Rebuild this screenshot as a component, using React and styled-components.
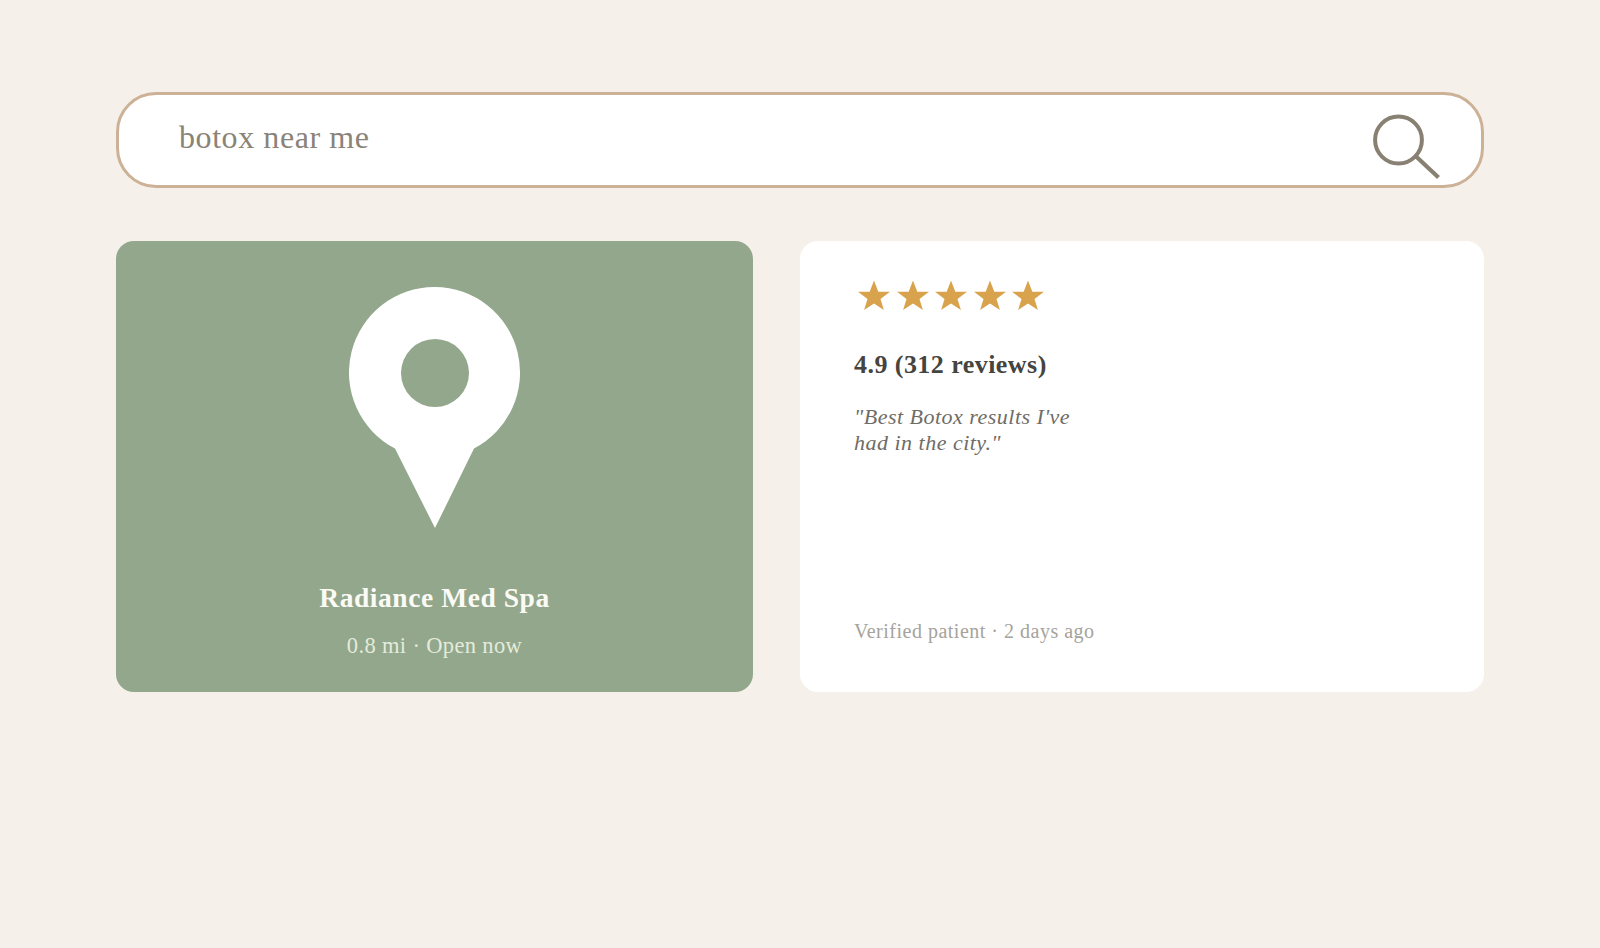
import React from "react"
import styled, { createGlobalStyle } from "styled-components"

const GlobalStyle = createGlobalStyle`
  html, body {
    margin: 0;
    padding: 0;
    background: #f5f0ea;
  }
  body {
    font-family: "Liberation Serif", "DejaVu Serif", serif;
  }
`

const Page = styled.div`
  min-height: 948px;
  box-sizing: border-box;
  padding: 92px 116px 0;
  display: flex;
  flex-direction: column;
  gap: 53px;
`

const SearchBar = styled.div`
  height: 96px;
  box-sizing: border-box;
  background: #fff;
  border: 3px solid #cdb196;
  border-radius: 40px;
  padding: 0 39.5px 0 60px;
  display: flex;
  align-items: center;
  justify-content: space-between;
`

const SearchText = styled.span`
  font-size: 32px;
  line-height: 1;
  letter-spacing: 0.57px;
  color: #8a8377;
  margin-top: -6px;
`

const SearchIcon = styled.svg`
  width: 70px;
  height: 66px;
  margin-top: 13px;
  flex: none;
`

const Cards = styled.div`
  display: grid;
  grid-template-columns: 637px 684px;
  justify-content: space-between;
  height: 451px;
`

const PlaceCard = styled.div`
  background: #92a78b;
  border-radius: 18px;
  display: flex;
  flex-direction: column;
  align-items: center;
  padding-top: 46px;
`

const Pin = styled.svg`
  width: 172px;
  height: 241px;
  flex: none;
`

const PlaceName = styled.div`
  margin-top: 53px;
  font-size: 27.5px;
  line-height: 34px;
  font-weight: 700;
  letter-spacing: 0.56px;
  color: #fbfaf5;
`

const PlaceMeta = styled.div`
  margin-top: 17px;
  font-size: 22.5px;
  line-height: 28px;
  letter-spacing: 0.35px;
  color: #e4ebdc;
`

const ReviewCard = styled.div`
  background: #fff;
  border-radius: 18px;
  box-sizing: border-box;
  padding: 39px 54px 48px;
  display: flex;
  flex-direction: column;
`

const Stars = styled.div`
  display: flex;
  gap: 6.6px;
  margin-left: 4px;
`

const Star = styled.svg`
  width: 32px;
  height: 31px;
  flex: none;
  fill: #d9a24c;
`

const Rating = styled.div`
  margin-top: 38px;
  font-size: 26px;
  line-height: 32px;
  font-weight: 700;
  letter-spacing: 0.45px;
  color: #46443e;
`

const Quote = styled.div`
  margin-top: 23px;
  width: 240px;
  font-size: 22px;
  line-height: 26px;
  font-style: italic;
  letter-spacing: 0.49px;
  color: #6f6c66;
`

const ReviewMeta = styled.div`
  margin-top: auto;
  font-size: 20px;
  line-height: 26px;
  letter-spacing: 0.5px;
  color: #a5a39c;
`

const starPoints = "16,0.500 20.300,11.700 32,11.700 22.500,19 25.900,30 16,23.400 6.100,30 9.500,19 0,11.700 11.700,11.700"

const App = () => {
  return (
    <>
      <GlobalStyle />
      <Page>
        <SearchBar>
          <SearchText>botox near me</SearchText>
          <SearchIcon viewBox="0 0 70 66" fill="none" stroke="#888073">
            <circle cx="26.500" cy="26" r="23.400" strokeWidth="4" />
            <path d="M42.500 41 L66.500 63.500" strokeWidth="4.200" />
          </SearchIcon>
        </SearchBar>
        <Cards>
          <PlaceCard>
            <Pin viewBox="0 0 172 241">
              <path
                fill="#fff"
                fillRule="evenodd"
                d="M86 0 A85.6 85.6 0 0 1 125 161.500 L86 241 L46 161.500 A85.600 85.600 0 0 1 86 0 Z M86 52 A34 34 0 1 0 86 120 A34 34 0 1 0 86 52 Z"
              />
            </Pin>
            <PlaceName>Radiance Med Spa</PlaceName>
            <PlaceMeta>0.8 mi · Open now</PlaceMeta>
          </PlaceCard>
          <ReviewCard>
            <Stars>
              {[0, 1, 2, 3, 4].map(i => (
                <Star key={i} viewBox="0 0 32 31">
                  <polygon points={starPoints} />
                </Star>
              ))}
            </Stars>
            <Rating>4.9 (312 reviews)</Rating>
            <Quote>"Best Botox results I've had in the city."</Quote>
            <ReviewMeta>Verified patient · 2 days ago</ReviewMeta>
          </ReviewCard>
        </Cards>
      </Page>
    </>
  )
}

export default App
